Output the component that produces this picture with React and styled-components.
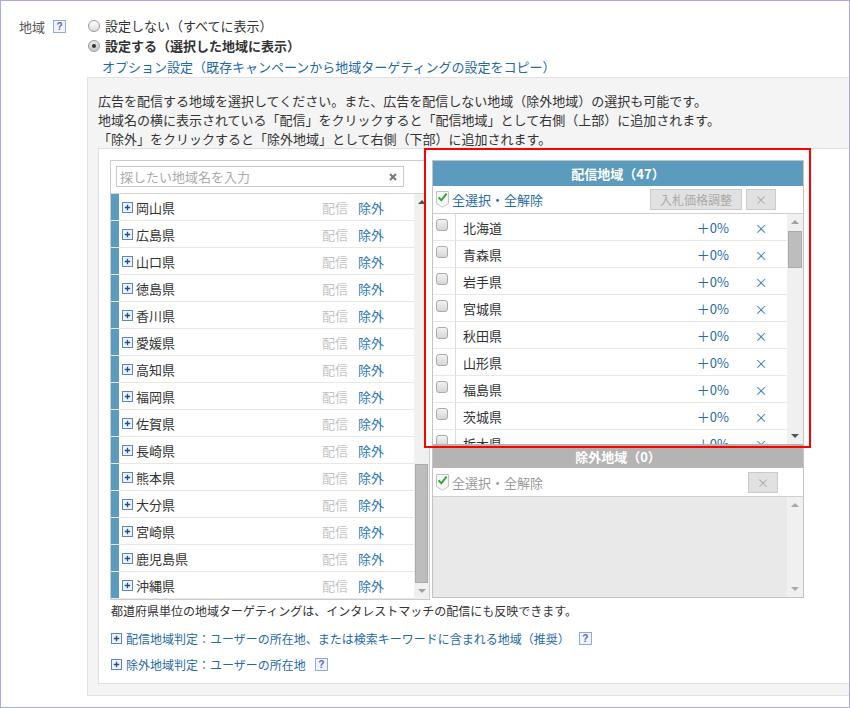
import React from 'react';
import styled, { createGlobalStyle } from 'styled-components';

const GlobalStyle = createGlobalStyle`
  html, body { margin: 0; padding: 0; background: #fff; }
  body {
    font-family: "Noto Sans CJK JP", "Noto Sans", sans-serif;
    font-size: 13px;
    color: #333;
  }
  * { box-sizing: border-box; }
`;

const BLUE = '#1f6aa8';

const Frame = styled.div`
  width: 850px;
  height: 708px;
  border: 1px solid #a9a9f2;
  overflow: hidden;
  display: flex;
  padding: 15px 0 0 18px;
`;

const LabelCol = styled.div`
  width: 68px;
  flex: none;
  display: flex;
  align-items: center;
  height: 21px;
  gap: 8px;
  color: #555;
  line-height: 20px;
`;

const Help = styled.span`
  display: inline-flex;
  align-items: center;
  justify-content: center;
  width: 13px;
  height: 13px;
  border: 1px solid #93a9d6;
  background: #f1f4fb;
  color: #5566c8;
  font-family: "Liberation Sans", Arial, sans-serif;
  font-weight: bold;
  font-size: 10px;
  line-height: 1;
  flex: none;
  margin-left: ${p => p.$ml || 0}px;
`;

const ContentCol = styled.div`
  flex: 1;
  min-width: 0;
`;

const RadioRow = styled.label`
  display: flex;
  align-items: center;
  height: 20px;
  gap: 5px;
  padding-left: 1px;
  line-height: 20px;
  font-weight: ${p => (p.$bold ? 700 : 400)};
`;

const RadioDot = styled.span`
  width: 12px;
  height: 12px;
  border-radius: 50%;
  border: 1px solid #9a9a9a;
  background: ${p => (p.$on ? 'linear-gradient(#e8e8e8, #c8c8c8)' : 'linear-gradient(#ffffff, #dcdcdc)')};
  display: inline-flex;
  align-items: center;
  justify-content: center;
  flex: none;
  &::after {
    content: '';
    width: 4px;
    height: 4px;
    border-radius: 50%;
    background: ${p => (p.$on ? '#333' : 'transparent')};
  }
`;

const OptionLink = styled.div`
  padding-left: 15px;
  line-height: 21px;
  height: 21px;
  color: ${BLUE};
`;

const GrayBox = styled.div`
  width: 790px;
  border: 1px solid #e2e2e2;
  background: #f4f4f4;
  padding: 13px 10px 11px 10px;
`;

const Desc = styled.p`
  margin: 0;
  line-height: 19px;
  white-space: nowrap;
`;

const InnerBox = styled.div`
  border: 1px solid #e0e0e0;
  background: #fff;
  padding: 11px 0 9px 11px;
`;

const PanelsRow = styled.div`
  display: flex;
  align-items: flex-start;
  gap: 2px;
`;

const LeftPanel = styled.div`
  width: 320px;
  height: 440px;
  border: 1px solid #cbcbcb;
  flex: none;
  display: flex;
  flex-direction: column;
`;

const SearchBar = styled.div`
  padding: 5px 0 6px 5px;
  border-bottom: 1px solid #d3d3d3;
  flex: none;
`;

const SearchField = styled.div`
  width: 288px;
  height: 21px;
  border: 1px solid #c8c8c8;
  display: flex;
  align-items: center;
  padding: 0 6px 0 3px;
`;

const SearchInput = styled.input`
  flex: 1;
  min-width: 0;
  border: none;
  outline: none;
  padding: 0;
  font: inherit;
  font-size: 13px;
  color: #333;
  background: transparent;
  &::placeholder { color: #aaa; }
`;

const ListArea = styled.div`
  display: flex;
  height: ${p => p.$h}px;
  flex: none;
`;

const Rows = styled.div`
  flex: 1;
  min-width: 0;
  overflow: hidden;
  display: flex;
  flex-direction: column;
  background: ${p => p.$bg || '#fff'};
`;

const PrefRow = styled.div`
  height: 27px;
  flex: none;
  border-bottom: 1px solid #e8e8e8;
  display: flex;
  align-items: center;
  padding-right: 30px;
`;

const Bar = styled.span`
  width: 8px;
  align-self: stretch;
  background: #5a9bbe;
  flex: none;
`;

const PlusWrap = styled.span`
  display: inline-flex;
  margin: 0 ${p => p.$mr || 3}px 0 ${p => p.$ml || 0}px;
  flex: none;
`;

const PrefName = styled.span`
  flex: 1;
`;

const Action = styled.span`
  color: ${p => (p.$active ? '#2d78b4' : '#c4c4c4')};
  margin-left: ${p => p.$ml || 0}px;
`;

const Scrollbar = styled.div`
  width: ${p => p.$w}px;
  flex: none;
  background: #f0f0f0;
  display: flex;
  flex-direction: column;
`;

const ScrollBtn = styled.div`
  height: 16px;
  flex: none;
  display: flex;
  align-items: center;
  justify-content: center;
`;

const Arrow = styled.span`
  width: 0;
  height: 0;
  border-left: 4px solid transparent;
  border-right: 4px solid transparent;
  ${p => (p.$dir === 'up'
    ? `border-bottom: 4px solid ${p.$color};`
    : `border-top: 4px solid ${p.$color};`)}
`;

const Track = styled.div`
  flex: 1;
  display: flex;
  flex-direction: column;
  justify-content: ${p => (p.$end ? 'flex-end' : 'flex-start')};
  padding: ${p => (p.$end ? '0 1px' : '1px 1px 0')};
`;

const Thumb = styled.div`
  height: ${p => p.$h}px;
  background: #bdbdbd;
  border: 1px solid #ababab;
`;

const RightWrap = styled.div`
  position: relative;
  flex: none;
`;

const HighlightFill = styled.div`
  position: absolute;
  left: -8px;
  top: -12px;
  width: 387px;
  height: 300px;
  background: #fff;
  z-index: 0;
`;

const HighlightFrame = styled.div`
  position: absolute;
  left: -8px;
  top: -12px;
  width: 387px;
  height: 300px;
  border: 2px solid #f00;
  z-index: 2;
  pointer-events: none;
`;

const RightPanel = styled.div`
  position: relative;
  z-index: 1;
  width: 372px;
  border: 1px solid #c4c4c4;
  background: #fff;
  display: flex;
  flex-direction: column;
`;

const PanelHeader = styled.div`
  height: ${p => p.$h}px;
  background: ${p => p.$bg};
  color: #fff;
  font-weight: 700;
  display: flex;
  align-items: center;
  justify-content: center;
  flex: none;
`;

const Toolbar = styled.div`
  height: ${p => p.$h}px;
  border-bottom: 1px solid #cfcfcf;
  display: flex;
  align-items: center;
  padding: 0 ${p => p.$pr}px 0 3px;
  flex: none;
`;

const SelectAll = styled.span`
  margin-left: 3px;
  flex: 1;
  color: ${p => (p.$muted ? '#999' : BLUE)};
`;

const GrayButton = styled.span`
  height: 21px;
  margin-left: ${p => p.$ml || 0}px;
  background: #e1e1e1;
  border: 1px solid #cbcbcb;
  color: #aaa;
  font-size: 12px;
  display: inline-flex;
  align-items: center;
  justify-content: center;
  width: ${p => p.$w}px;
`;

const AreaRow = styled.div`
  height: 27px;
  flex: none;
  border-bottom: 1px solid #e8e8e8;
  display: flex;
  align-items: center;
`;

const CheckCell = styled.span`
  width: 23px;
  align-self: stretch;
  border-right: 1px solid #dcdcdc;
  display: flex;
  padding: 5px 0 0 3px;
  flex: none;
`;

const Box = styled.span`
  width: 12px;
  height: 12px;
  border: 1px solid #aaa;
  border-radius: 3px;
  background: linear-gradient(#f2f2f2, #d6d6d6);
`;

const AreaName = styled.span`
  flex: 1;
  padding-left: 7px;
`;

const Rate = styled.span`
  width: 80px;
  text-align: right;
  padding-right: 8px;
  color: ${BLUE};
`;

const Remove = styled.span`
  width: 50px;
  padding-right: 2px;
  text-align: center;
  color: #2d78b4;
`;

const Note = styled.div`
  margin-top: 1px;
  font-size: 12px;
  line-height: 19px;
  padding-left: 1px;
`;

const JudgeLink = styled.div`
  margin-top: ${p => p.$mt}px;
  display: flex;
  align-items: center;
  height: 19px;
  font-size: 12px;
  color: ${BLUE};
  padding-left: 1px;
`;

const PlusIcon = () => (
  <svg width="11" height="11" viewBox="0 0 11 11">
    <rect x="0.5" y="0.5" width="10" height="10" fill="#eef3fa" stroke="#5a87c5" />
    <path d="M2.8 5.5H8.2M5.5 2.8V8.2" stroke="#1d4f8a" strokeWidth="1.3" />
  </svg>
);

const ShieldCheck = () => (
  <svg width="13" height="17" viewBox="0 0 13 17" style={{ flex: 'none' }}>
    <path d="M0.5 0.5H12.5V12.5L6.5 16.3L0.5 12.5Z" fill="#f7f7f7" stroke="#c2c2c2" />
    <path d="M2.6 6.3L5.3 9.3L10.6 2.6" fill="none" stroke="#35a335" strokeWidth="2" />
  </svg>
);

const ClearIcon = () => (
  <svg width="8" height="8" viewBox="0 0 8 8">
    <path d="M1 1L7 7M7 1L1 7" stroke="#777" strokeWidth="2" />
  </svg>
);

const leftPrefs = ['岡山県', '広島県', '山口県', '徳島県', '香川県', '愛媛県', '高知県', '福岡県', '佐賀県', '長崎県', '熊本県', '大分県', '宮崎県', '鹿児島県', '沖縄県'];
const rightPrefs = ['北海道', '青森県', '岩手県', '宮城県', '秋田県', '山形県', '福島県', '茨城県', '栃木県'];

export default function App() {
  return (
    <>
      <GlobalStyle />
      <Frame>
        <LabelCol>
          <span>地域</span>
          <Help>?</Help>
        </LabelCol>
        <ContentCol>
          <RadioRow>
            <RadioDot />
            <span>設定しない（すべてに表示）</span>
          </RadioRow>
          <RadioRow $bold>
            <RadioDot $on />
            <span>設定する（選択した地域に表示）</span>
          </RadioRow>
          <OptionLink>オプション設定（既存キャンペーンから地域ターゲティングの設定をコピー）</OptionLink>
          <GrayBox>
            <Desc>
              広告を配信する地域を選択してください。また、広告を配信しない地域（除外地域）の選択も可能です。<br />
              地域名の横に表示されている「配信」をクリックすると「配信地域」として右側（上部）に追加されます。<br />
              「除外」をクリックすると「除外地域」として右側（下部）に追加されます。
            </Desc>
            <InnerBox>
              <PanelsRow>
                <LeftPanel>
                  <SearchBar>
                    <SearchField>
                      <SearchInput placeholder="探したい地域名を入力" />
                      <ClearIcon />
                    </SearchField>
                  </SearchBar>
                  <ListArea $h={405}>
                    <Rows>
                      {leftPrefs.map(p => (
                        <PrefRow key={p}>
                          <Bar />
                          <PlusWrap $ml={3}><PlusIcon /></PlusWrap>
                          <PrefName>{p}</PrefName>
                          <Action>配信</Action>
                          <Action $active $ml={10}>除外</Action>
                        </PrefRow>
                      ))}
                    </Rows>
                    <Scrollbar $w={15}>
                      <ScrollBtn><Arrow $dir="up" $color="#555" /></ScrollBtn>
                      <Track $end><Thumb $h={119} /></Track>
                      <ScrollBtn><Arrow $dir="down" $color="#a0a0a0" /></ScrollBtn>
                    </Scrollbar>
                  </ListArea>
                </LeftPanel>

                <RightWrap>
                  <HighlightFill />
                  <RightPanel>
                    <PanelHeader $h={25} $bg="#5a9bbe">配信地域（47）</PanelHeader>
                    <Toolbar $h={28} $pr={27}>
                      <ShieldCheck />
                      <SelectAll>全選択・全解除</SelectAll>
                      <GrayButton $w={92}>入札価格調整</GrayButton>
                      <GrayButton $w={30} $ml={4}>×</GrayButton>
                    </Toolbar>
                    <ListArea $h={230}>
                      <Rows>
                        {rightPrefs.map(p => (
                          <AreaRow key={p}>
                            <CheckCell><Box /></CheckCell>
                            <AreaName>{p}</AreaName>
                            <Rate>＋0%</Rate>
                            <Remove>×</Remove>
                          </AreaRow>
                        ))}
                      </Rows>
                      <Scrollbar $w={16}>
                        <ScrollBtn><Arrow $dir="up" $color="#a0a0a0" /></ScrollBtn>
                        <Track><Thumb $h={37} /></Track>
                        <ScrollBtn><Arrow $dir="down" $color="#555" /></ScrollBtn>
                      </Scrollbar>
                    </ListArea>
                    <PanelHeader $h={24} $bg="#b4b4b4">除外地域（0）</PanelHeader>
                    <Toolbar $h={29} $pr={25}>
                      <ShieldCheck />
                      <SelectAll $muted>全選択・全解除</SelectAll>
                      <GrayButton $w={30}>×</GrayButton>
                    </Toolbar>
                    <ListArea $h={100}>
                      <Rows $bg="#e9e9e9" />
                      <Scrollbar $w={16}>
                        <ScrollBtn><Arrow $dir="up" $color="#a8a8a8" /></ScrollBtn>
                        <Track />
                        <ScrollBtn><Arrow $dir="down" $color="#a8a8a8" /></ScrollBtn>
                      </Scrollbar>
                    </ListArea>
                  </RightPanel>
                  <HighlightFrame />
                </RightWrap>
              </PanelsRow>

              <Note>都道府県単位の地域ターゲティングは、インタレストマッチの配信にも反映できます。</Note>
              <JudgeLink $mt={9}>
                <PlusWrap $mr={4}><PlusIcon /></PlusWrap>
                <span>配信地域判定：ユーザーの所在地、または検索キーワードに含まれる地域（推奨）</span>
                <Help $ml={9}>?</Help>
              </JudgeLink>
              <JudgeLink $mt={7}>
                <PlusWrap $mr={4}><PlusIcon /></PlusWrap>
                <span>除外地域判定：ユーザーの所在地</span>
                <Help $ml={9}>?</Help>
              </JudgeLink>
            </InnerBox>
          </GrayBox>
        </ContentCol>
      </Frame>
    </>
  );
}
